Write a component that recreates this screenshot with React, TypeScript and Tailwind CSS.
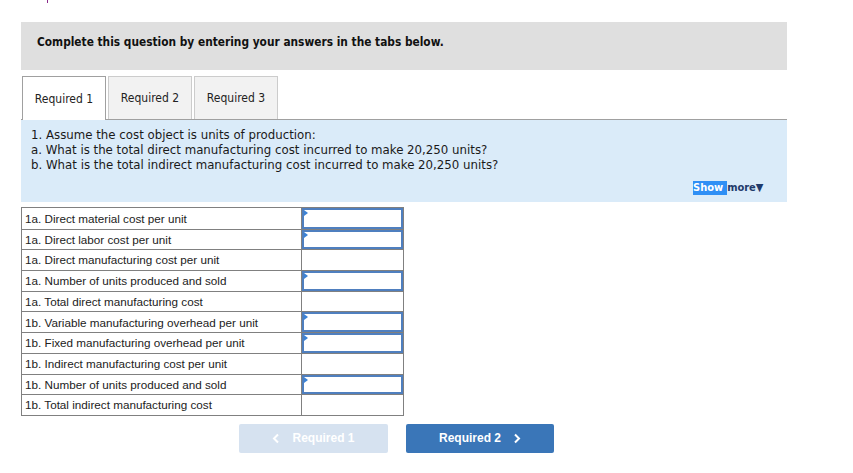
import React from "react";

const rows: { label: string; input: boolean }[] = [
  { label: "1a. Direct material cost per unit", input: true },
  { label: "1a. Direct labor cost per unit", input: true },
  { label: "1a. Direct manufacturing cost per unit", input: false },
  { label: "1a. Number of units produced and sold", input: true },
  { label: "1a. Total direct manufacturing cost", input: false },
  { label: "1b. Variable manufacturing overhead per unit", input: true },
  { label: "1b. Fixed manufacturing overhead per unit", input: true },
  { label: "1b. Indirect manufacturing cost per unit", input: false },
  { label: "1b. Number of units produced and sold", input: true },
  { label: "1b. Total indirect manufacturing cost", input: false },
];

const tahoma = "font-['DejaVu_Sans_Condensed','DejaVu_Sans',sans-serif] [font-stretch:condensed]";

export default function App() {
  return (
    <div className="w-[853px] h-[473px] bg-white overflow-hidden relative">
      <div className="ml-[47px] w-[1px] h-[3px] bg-[#8a2a8a]" />
      <div className="ml-[21px] w-[766px] mt-[19px]">
        <div className={`h-[48px] bg-[#dfdfdf] pl-[16px] pt-[12px] ${tahoma} text-[11.8px] font-bold text-[#111]`}>
          Complete this question by entering your answers in the tabs below.
        </div>
        <div className="mt-[6px] flex items-end gap-[2px] pl-[1px] h-[43px]">
          <div className={`relative z-10 w-[84px] h-[44px] -mb-[1px] bg-white border border-b-0 border-[#a0a0a0] flex items-center justify-center ${tahoma} text-[12px] text-[#222]`}>
            Required 1
          </div>
          <div className={`w-[84px] h-[43px] bg-[#f2f2f2] border border-b-0 border-[#cccccc] flex items-center justify-center ${tahoma} text-[12px] text-[#222]`}>
            Required 2
          </div>
          <div className={`w-[84px] h-[43px] bg-[#f2f2f2] border border-b-0 border-[#cccccc] flex items-center justify-center ${tahoma} text-[12px] text-[#222]`}>
            Required 3
          </div>
        </div>
        <div className="border-t border-[#a0a0a0] bg-[#daebf9] h-[83px] relative">
          <div className={`pl-[10px] pt-[7px] ${tahoma} text-[13.1px] leading-[15px] text-[#1a1a1a]`}>
            <div>1. Assume the cost object is units of production:</div>
            <div>a. What is the total direct manufacturing cost incurred to make 20,250 units?</div>
            <div>b. What is the total indirect manufacturing cost incurred to make 20,250 units?</div>
          </div>
          <div className={`absolute left-[672px] top-[61px] flex items-center ${tahoma} text-[11px] font-bold leading-[14px] whitespace-pre`}>
            <span className="bg-[#2f8ff5] text-white pr-[4px]">Show</span>
            <span className="text-[#1f3a6b]">more</span>
            <span className="text-[#1f3a6b] text-[11px]">▼</span>
          </div>
        </div>
        <div className="mt-[5px] w-[383px] border border-[#808080] font-['Liberation_Sans',Arial,sans-serif] text-[11.7px] text-[#222]">
          {rows.map((r, i) => (
            <div key={i} className={`flex h-[20.7px] ${i > 0 ? "border-t border-[#808080]" : ""}`}>
              <div className="w-[280px] border-r border-[#808080] pl-[3px] flex items-center">{r.label}</div>
              <div className="flex-1 relative">
                {r.input && (
                  <div className="absolute inset-0 border-2 border-[#4f7fbf] bg-white">
                    <div className="absolute left-0 top-0 w-0 h-0 border-t-[3px] border-b-[3px] border-l-[4px] border-t-transparent border-b-transparent border-l-[#3b82d6]" />
                  </div>
                )}
              </div>
            </div>
          ))}
        </div>
        <div className="mt-[8px] ml-[218px] flex gap-[18px] font-['Liberation_Sans',Arial,sans-serif] text-[12px] font-bold text-white">
          <div className="w-[149px] h-[29px] rounded-[2px] bg-[#d6e2f0] flex items-center justify-center gap-[12px]">
            <svg width="8" height="11" viewBox="0 0 8 11"><path d="M6 1.5 L2 5.5 L6 9.5" stroke="white" strokeWidth="2" fill="none" /></svg>
            <span>Required 1</span>
          </div>
          <div className="w-[148px] h-[29px] rounded-[2px] bg-[#3a76b8] flex items-center justify-center gap-[12px]">
            <span>Required 2</span>
            <svg width="8" height="11" viewBox="0 0 8 11"><path d="M2 1.5 L6 5.5 L2 9.5" stroke="white" strokeWidth="2" fill="none" /></svg>
          </div>
        </div>
      </div>
    </div>
  );
}
